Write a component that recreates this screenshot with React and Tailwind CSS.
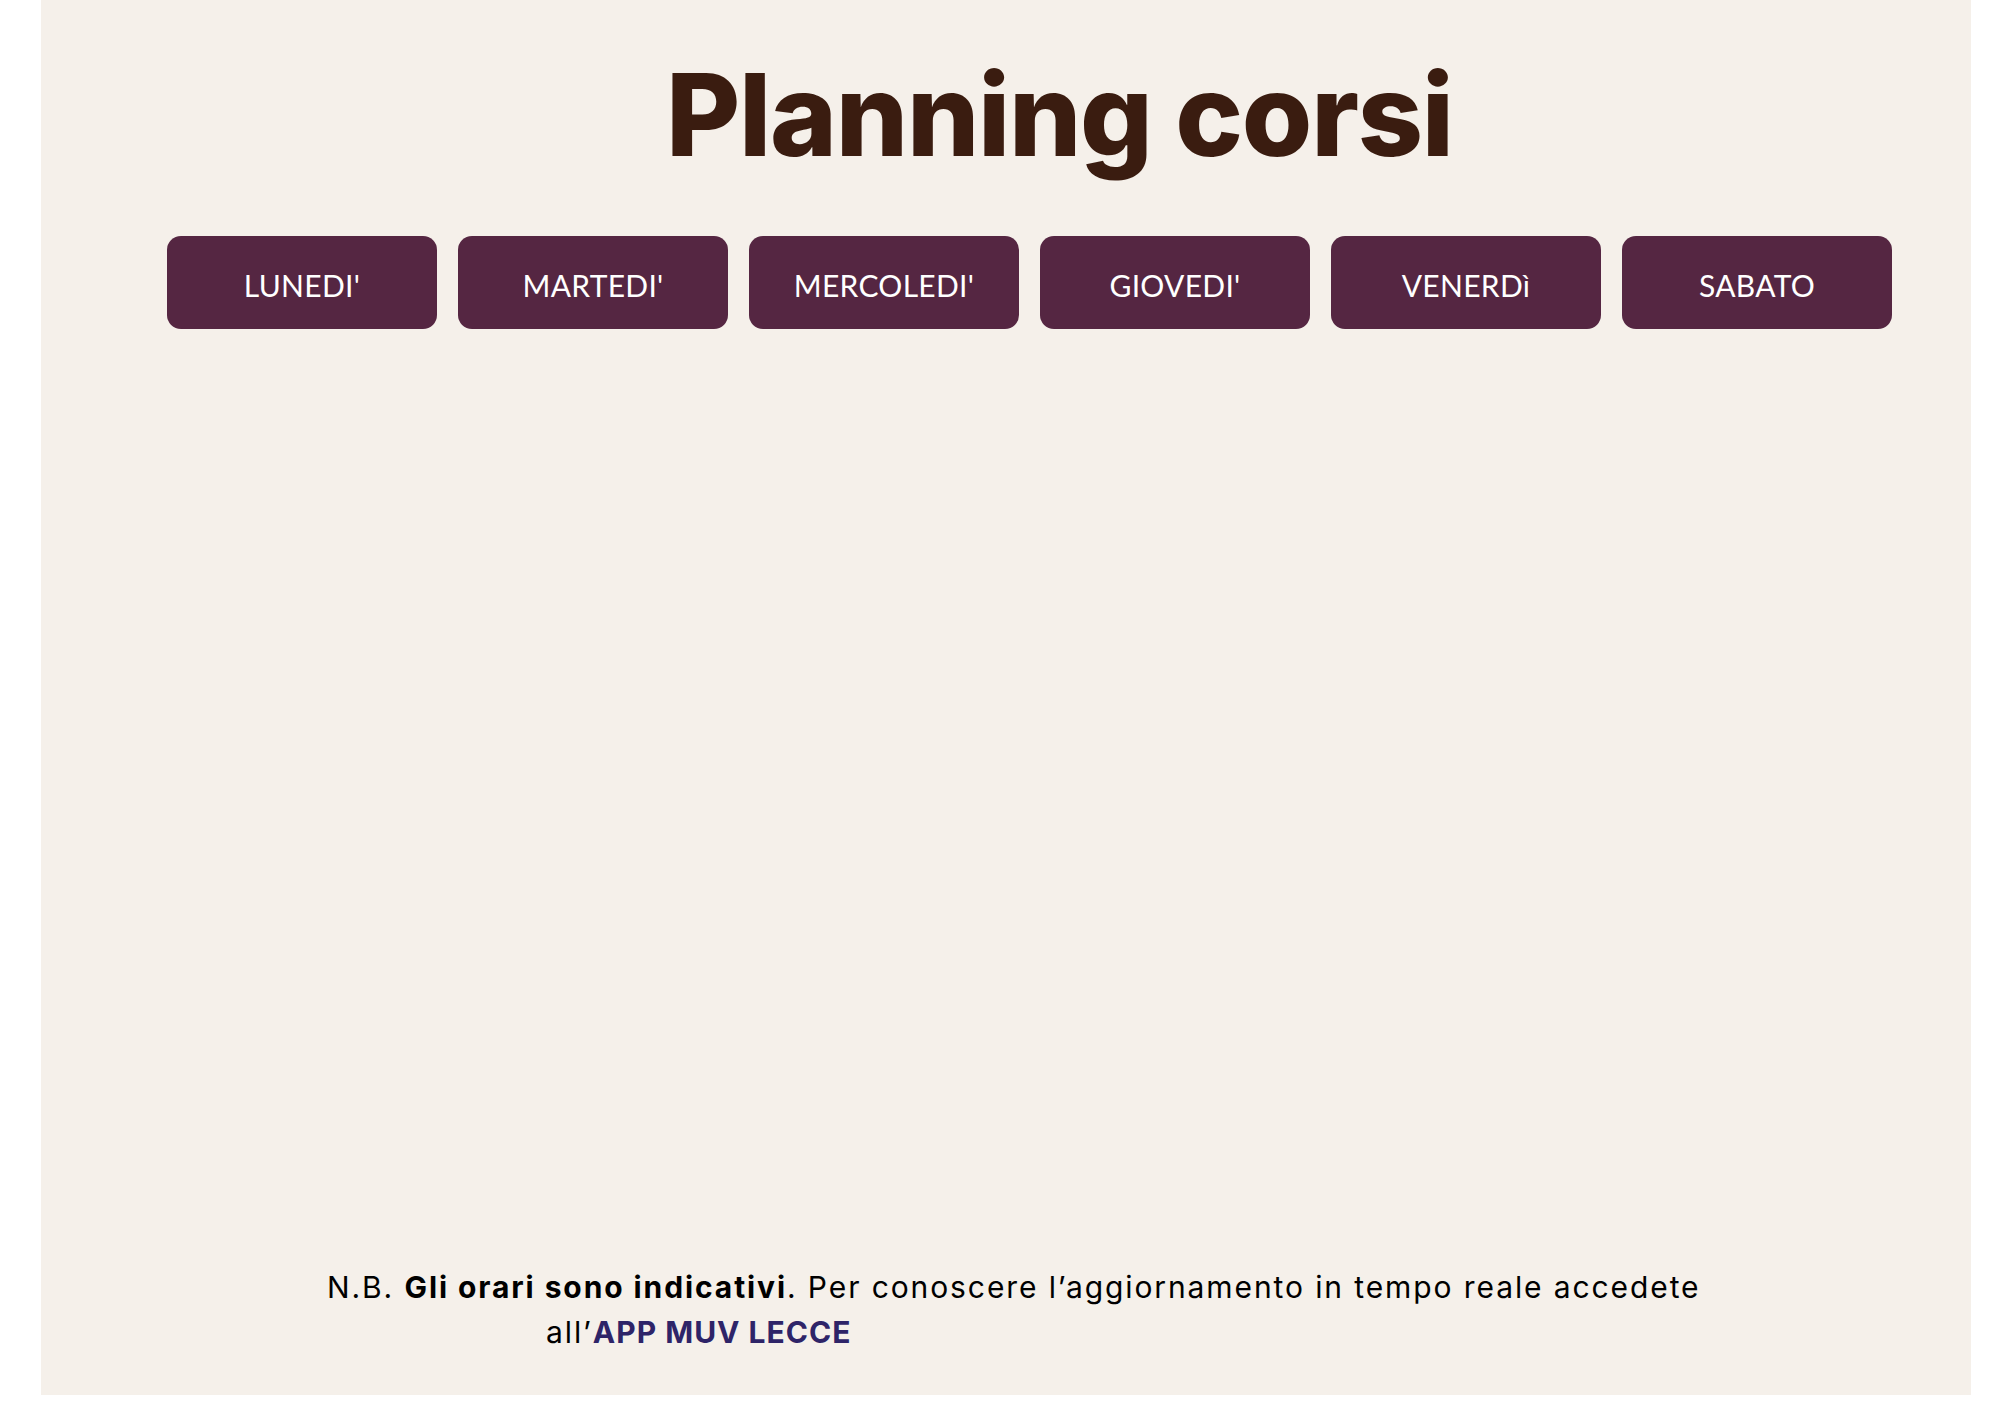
const days = ["LUNEDI'", "MARTEDI'", "MERCOLEDI'", "GIOVEDI'", "VENERDì", "SABATO"];

function DayButton({ label }) {
    return (
        <button className="w-[270px] h-[93px] rounded-[14px] bg-[#552642] text-white text-[30px] pt-[5px] tracking-[0.3px]">
            {label}
        </button>
    );
}

export default function App() {
    return (
        <div className="min-h-[1414px] bg-white" style={{ fontFamily: 'Lato, "Noto Sans", sans-serif' }}>
            <div className="ml-[41px] w-[1930px] h-[1395px] bg-[#f5f0ea] flex flex-col">
                <h1
                    className="pt-[58px] pl-[625px] text-[114px] leading-none font-extrabold text-[#3a1c10] tracking-[-1.3px]"
                    style={{ fontFamily: 'Inter, sans-serif' }}
                >
                    Planning corsi
                </h1>

                <div className="mt-[64px] ml-[126px] flex gap-[21px]">
                    {days.map((d) => (
                        <DayButton key={d} label={d} />
                    ))}
                </div>

                <div
                    className="mt-auto mb-[40px] pl-[286px] text-[30px] leading-[45px] text-black tracking-[1.9px]"
                    style={{ fontFamily: 'Inter, sans-serif' }}
                >
                    <p>
                        N.B. <span className="font-bold">Gli orari sono indicativi</span>. Per conoscere l’aggiornamento in tempo reale accedete
                    </p>
                    <p className="pl-[219px]">
                        all’<span className="font-bold text-[#2e2468] tracking-[1px]">APP MUV LECCE</span>
                    </p>
                </div>
            </div>
        </div>
    );
}
